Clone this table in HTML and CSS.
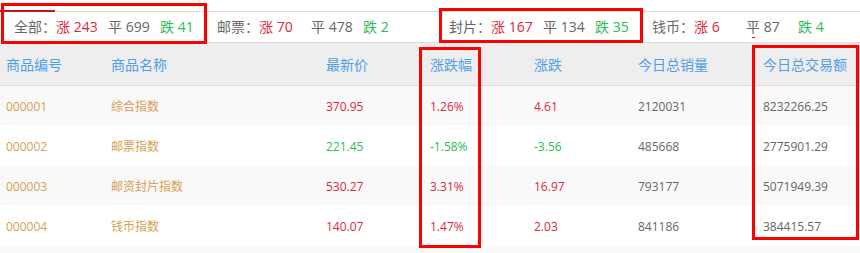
FILE: index.html
```html
<!DOCTYPE html>
<html lang="zh-CN">
<head>
<meta charset="utf-8">
<title>指数行情</title>
<link rel="stylesheet" href="styles.css">
</head>
<body>
<div class="page">
  <div class="tabs"><span class="tab-active"></span></div>
  <div class="stats">
    <div class="group">
      <span class="label">全部：</span>
      <span class="item up">涨 243</span>
      <span class="item flat">平 699</span>
      <span class="item down">跌 41</span>
    </div>
    <div class="group group-wide">
      <span class="label">邮票：</span>
      <span class="item up">涨 70</span>
      <span class="item flat">平 478</span>
      <span class="item down">跌 2</span>
    </div>
    <div class="group">
      <span class="label">封片：</span>
      <span class="item up">涨 167</span>
      <span class="item flat">平 134</span>
      <span class="item down">跌 35</span>
    </div>
    <div class="group">
      <span class="label">钱币：</span>
      <span class="item up">涨 6</span>
      <span class="item flat">平 87</span>
      <span class="item down">跌 4</span>
    </div>
  </div>
  <div class="table">
    <div class="row head">
      <span>商品编号</span><span>商品名称</span><span>最新价</span><span>涨跌幅</span><span>涨跌</span><span>今日总销量</span><span>今日总交易额</span>
    </div>
    <div class="row odd">
      <span class="code">000001</span><span class="code">综合指数</span><span class="up">370.95</span><span class="up">1.26%</span><span class="up">4.61</span><span class="num">2120031</span><span class="num">8232266.25</span>
    </div>
    <div class="row">
      <span class="code">000002</span><span class="code">邮票指数</span><span class="down">221.45</span><span class="down">-1.58%</span><span class="down">-3.56</span><span class="num">485668</span><span class="num">2775901.29</span>
    </div>
    <div class="row odd">
      <span class="code">000003</span><span class="code">邮资封片指数</span><span class="up">530.27</span><span class="up">3.31%</span><span class="up">16.97</span><span class="num">793177</span><span class="num">5071949.39</span>
    </div>
    <div class="row">
      <span class="code">000004</span><span class="code">钱币指数</span><span class="up">140.07</span><span class="up">1.47%</span><span class="up">2.03</span><span class="num">841186</span><span class="num">384415.57</span>
    </div>
    <div class="row odd tail"></div>
  </div>

  <div class="mark mark-1"></div>
  <div class="mark mark-2"></div>
  <div class="mark mark-3"></div>
  <div class="mark mark-4"></div>
  <div class="tick"></div>
</div>
</body>
</html>
```
FILE: styles.css
```css
* { box-sizing: border-box; }
html, body { margin: 0; padding: 0; background: #fff; }
body {
  font-family: "Open Sans", "Noto Sans CJK SC", sans-serif;
  color: #666;
  width: 860px;
  height: 253px;
  overflow: hidden;
}
.page { position: relative; width: 860px; height: 253px; }

.tabs {
  height: 12px;
  border-bottom: 1px solid #dcdcdc;
  display: flex;
  align-items: flex-end;
}
.tab-active {
  display: block;
  width: 55px;
  height: 2px;
  background: #c4151c;
  margin-bottom: -1px;
}

.stats {
  height: 31px;
  border-bottom: 1px solid #dcdcdc;
  display: flex;
  align-items: center;
  padding-left: 14px;
  font-size: 14px;
  line-height: 20px;
}
.group { display: flex; width: 203px; flex: none; }
.group-wide { width: 232px; }
.label { width: 42px; flex: none; color: #666; }
.item { width: 52px; flex: none; white-space: nowrap; }
.up { color: #d92a3c; }
.flat { color: #666; }
.down { color: #2dbb57; }

.table { font-size: 12px; }
.row {
  display: grid;
  grid-template-columns: 105px 215px 104px 104px 104px 125px 103px;
  height: 40px;
  align-items: center;
}
.row > span { padding-left: 6px; white-space: nowrap; }
.row.head {
  height: 43px;
  background: #eeeeee;
  border-bottom: 1px solid #dcdcdc;
  font-size: 14px;
  color: #4f9ee8;
}
.row.odd { background: #f9f9f9; }
.code { color: #d6a052; }
.num { color: #666; }
.tail { height: 10px; }

.mark {
  position: absolute;
  border: 3px solid #ff0000;
}
.mark-1 { left: 1px; top: 3px; width: 206px; height: 41px; }
.mark-2 { left: 439px; top: 8px; width: 204px; height: 35px; }
.mark-3 { left: 419px; top: 47px; width: 62px; height: 201px; }
.mark-4 { left: 752px; top: 45px; width: 107px; height: 195px; }
.tick {
  position: absolute;
  left: 752px;
  top: 37px;
  width: 3px;
  height: 1px;
  background: #ff0000;
}
```
